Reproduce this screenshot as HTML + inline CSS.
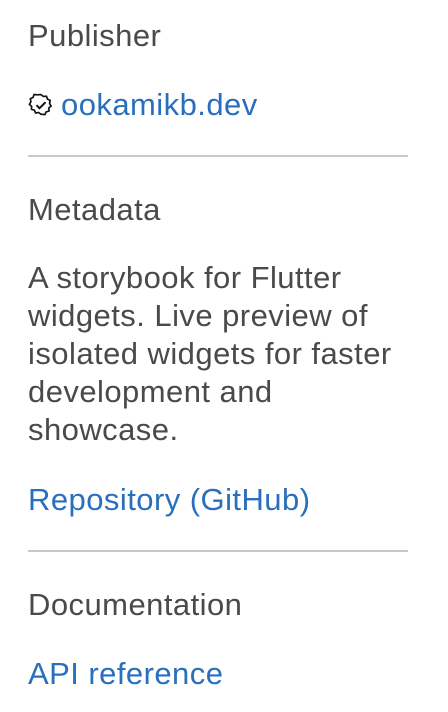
<!DOCTYPE html>
<html><head><style>
body{margin:0;width:448px;height:712px;background:#fff;font-family:"Liberation Sans",sans-serif;color:#4a4a4a;position:relative;overflow:hidden}
.t{position:absolute;left:28px;font-size:31px;line-height:38px;letter-spacing:0.45px;white-space:nowrap}
a{color:#2a6fbd;text-decoration:none}
.hr{position:absolute;left:28px;width:380px;height:2px;background:#c8c8c8}
</style></head><body>
<div class="t" style="top:17px">Publisher</div>
<div class="t" style="top:86px"><svg width="26" height="26" viewBox="0 0 24 24" style="vertical-align:-3px;margin-right:7px"><path d="M12 2.5l2.3 1.8 2.9-.3 1 2.8 2.6 1.3-.6 2.9 1.5 2.5-2.2 1.9.2 2.9-2.8.8-1.2 2.7-2.9-.5L12 21.5l-2.3-1.8-2.9.5-1.2-2.7-2.8-.8.2-2.9L.8 11.9l1.5-2.5-.6-2.9 2.6-1.3 1-2.8 2.9.3z" fill="none" stroke="#111" stroke-width="1.6" stroke-linejoin="round" transform="translate(0.5 0) scale(0.96)"/><path d="M7.8 12.2l2.8 2.8 5.6-5.6" fill="none" stroke="#111" stroke-width="1.8"/></svg><a>ookamikb.dev</a></div>
<div class="hr" style="top:155px"></div>
<div class="t" style="top:191px">Metadata</div>
<div class="t" style="top:259px">A storybook for Flutter<br>widgets. Live preview of<br>isolated widgets for faster<br>development and<br>showcase.</div>
<div class="t" style="top:481px"><a>Repository (GitHub)</a></div>
<div class="hr" style="top:550px"></div>
<div class="t" style="top:586px">Documentation</div>
<div class="t" style="top:655px"><a>API reference</a></div>
</body></html>
